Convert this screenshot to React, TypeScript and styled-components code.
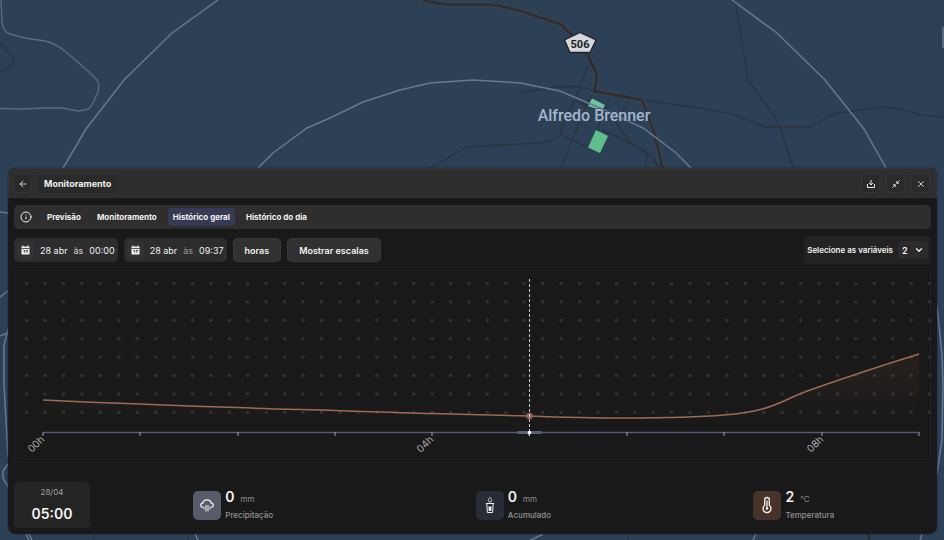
import React, { useState } from "react";
import styled, { createGlobalStyle } from "styled-components";
import { ArrowLeft, ChevronDown, Info, X } from "lucide-react";

const GlobalStyle = createGlobalStyle`
  * { box-sizing: border-box; }
  body { margin: 0; background: #2c4156; }
  button, select { font: inherit; color: inherit; border: 0; margin: 0; cursor: pointer; }
`;

const Page = styled.div`
  position: relative;
  min-height: 100vh;
  display: flex;
  flex-direction: column;
  justify-content: flex-end;
  padding: 8px 7px 6px 8px;
  overflow: hidden;
  font-family: Inter, "Liberation Sans", sans-serif;
  color: #f2f2f2;
`;

const MapCanvas = styled.svg`
  position: absolute;
  inset: 0;
  width: 100%;
  height: 100%;
`;

const Panel = styled.section`
  position: relative;
  border-radius: 8px;
  background: #191919;
  overflow: hidden;
  box-shadow: 0 0 2px rgba(20, 26, 32, 0.8);
`;

const Header = styled.header`
  display: flex;
  align-items: center;
  gap: 7px;
  height: 30px;
  padding: 1px 7px 0 5px;
  background: #2d2e2d;
  border: 1px solid #343534;
  border-bottom-color: #303130;
  border-radius: 8px 8px 0 0;
`;

const Title = styled.h1`
  margin: 0 auto 0 0;
  padding: 2px 6px;
  border-radius: 4px;
  background: #292a29;
  font-size: 9px;
  line-height: 14px;
  font-weight: 700;
`;

const IconButton = styled.button`
  display: grid;
  place-items: center;
  width: 17px;
  height: 17px;
  padding: 0;
  border-radius: 4px;
  background: #292a29;
  box-shadow: 0 0 0 1px #333433;
`;

const Actions = styled.div`
  display: flex;
  gap: 8px;
`;

const Body = styled.div`
  padding: 7px 6px 6px;
`;

const TabBar = styled.nav`
  display: flex;
  align-items: center;
  height: 24px;
  padding: 0 6px;
  border-radius: 5px;
  background: #2e2e2e;
`;

const InfoBadge = styled.span`
  display: grid;
  place-items: center;
  width: 12px;
  margin-right: 10px;
`;

const Tab = styled.button<{ $active: boolean }>`
  height: 18px;
  padding: 0 5px;
  margin-right: 6px;
  border-radius: 4px;
  background: ${(p) => (p.$active ? "#373a55" : "transparent")};
  font-size: 8px;
  font-weight: 700;
  white-space: nowrap;
`;

const Toolbar = styled.div`
  display: flex;
  align-items: center;
  gap: 6px;
  height: 30px;
  margin: 6px 0 5px;
`;

const DateButton = styled.button`
  display: flex;
  align-items: center;
  gap: 6px;
  height: 24px;
  padding: 0 3px;
  border-radius: 5px;
  background: #2d2d2d;
  font-size: 9px;
  white-space: nowrap;
`;

const CalendarBox = styled.span`
  display: grid;
  place-items: center;
  width: 17px;
  height: 18px;
  border-radius: 4px;
  background: #323232;
`;

const Muted = styled.span<{ $dim?: boolean }>`
  color: ${(p) => (p.$dim ? "#9a9a9a" : "#d8d8d8")};
`;

const ToolButton = styled.button`
  height: 24px;
  padding: 0 12px;
  border-radius: 5px;
  background: #313131;
  box-shadow: inset 0 0 0 1px #383838;
  font-size: 9px;
  font-weight: 600;
  white-space: nowrap;
`;

const VariableField = styled.label`
  display: flex;
  align-items: center;
  gap: 5px;
  height: 28px;
  margin-left: auto;
  padding: 0 3px;
  border-radius: 4px;
  background: #222222;
  font-size: 8px;
  font-weight: 600;
  white-space: nowrap;
`;

const SelectShell = styled.span`
  display: grid;
  align-items: center;
  border-radius: 4px;
  background: #2b2b2b;

  & > * { grid-area: 1 / 1; }
  & > svg { justify-self: end; margin-right: 4px; pointer-events: none; }
`;

const Select = styled.select`
  appearance: none;
  width: 30px;
  height: 18px;
  padding: 0 4px;
  background: transparent;
  font-size: 9px;
  font-weight: 600;
`;

const ChartCard = styled.figure`
  margin: 0;
  border-radius: 4px;
  box-shadow: inset 0 0 0 1px #1f1f1f;

  svg { display: block; width: 100%; height: auto; }
`;

const Footer = styled.footer`
  display: flex;
  align-items: center;
  gap: 6px;
  margin-top: 19px;
`;

const TimeCard = styled.div`
  display: flex;
  flex-direction: column;
  align-items: center;
  gap: 6px;
  width: 76px;
  height: 46px;
  padding-top: 4px;
  border-radius: 4px;
  background: #242424;
`;

const DayText = styled.span`
  font-size: 8px;
  line-height: 12px;
  color: #a3a3a3;
`;

const HourText = styled.strong`
  font-size: 14px;
  line-height: 20px;
  font-weight: 600;
`;

const Stats = styled.div`
  flex: 1;
  display: grid;
  grid-template-columns: repeat(3, 1fr);
  column-gap: 6px;
  justify-items: center;
`;

const Stat = styled.div`
  display: flex;
  align-items: center;
  gap: 4px;
`;

const StatIcon = styled.span<{ $tone: string }>`
  display: grid;
  place-items: center;
  width: 28px;
  height: 29px;
  border-radius: 5px;
  background: ${(p) => p.$tone};
`;

const StatText = styled.div`
  display: flex;
  flex-direction: column;
`;

const StatValue = styled.div`
  display: flex;
  align-items: baseline;
  gap: 6px;
  font-size: 14px;
  line-height: 18px;
  font-weight: 600;
`;

const Unit = styled.span`
  font-size: 8px;
  font-weight: 400;
  color: #8c8c8c;
`;

const StatLabel = styled.span`
  font-size: 8px;
  line-height: 14px;
  font-weight: 500;
  color: #939393;
`;

const rings = [
  "M218 0 172 33 124 80 86 129 63 168 30 240 8 330 4 345 4 385 8 456 27 530 32 540",
  "M732 0 777 33 825 80 864 129 886 168 920 250 937 307 942 355 943 385 942 440 937 473 922 534 920 540",
  "M258 168 273 153 307 128 330 118 363 102 400 90 430 83 473 80 520 83 560 91 600 108 643 128 675 152 691 168",
  "M0 212 8 213M0 297 8 291M0 336 8 333M8 464 3 471 3 478 8 487M195 534 198 540M529 541 543 534M753 540 756 534M943 27V48M25 532 29 540",
];

const streets = [
  "M736 5 741 37 748 80 775 117 781 130 793 168",
  "M642 100 700 108 733 114 765 127 810 127 833 114 880 107 900 109 920 115 944 117",
  "M430 168 467 147 500 145 540 143Q553 141 561 134",
  "M520 92 540 90Q573 82 594 91",
  "M588 66 578 92 561 130 561 135 592 149",
  "M592 95 586 106 561 168",
  "M574 101 590 106M609 100 595 136M602 130 640 148 652 156 659 168M648 153 645 168M628 102 616 123 630 142 648 155M500 0 495 4",
  "M94 534V540M188 534V540M628 534V540",
];

const highway =
  "M416-3 430 2Q445 5 465 4.500L490 4.500Q510 7 535 16L560 24Q569 30 588 56L596 72Q598 77 594 91L642 100 654 132 663 170";

function MapView() {
  return (
    <MapCanvas viewBox="0 0 944 540" preserveAspectRatio="xMidYMid slice" aria-label="Mapa de Alfredo Brenner">
      <rect width="944" height="540" fill="#2c4156" />
      <g fill="none" strokeLinejoin="round">
        <path d="M0 43 10 54Q17 62 10 67L0 71" stroke="#2b3746" strokeWidth="2" />
        {streets.map((d) => (
          <path key={d} d={d} stroke="#2b3440" strokeWidth="1.4" />
        ))}
        <path d="M1 0 2 22Q3 32 10 34L25 38 45 41Q55 43 66 52L88 71 97 80Q100 84 98 92L92 105Q90 110 78 111L62 108 45 108 20 109 0 108.500" stroke="#576c83" strokeWidth="1.4" />
        <path d="M869 533V541" stroke="#2c2f36" strokeWidth="3" />
        <path d={highway} stroke="#49494b" strokeWidth="4" />
        <path d={highway} stroke="#2d2f35" strokeWidth="3" />
      </g>
      <path d="M592 98.500 605 105 602 110.500 588 106Z" fill="#6bc6a0" />
      <path d="M596 130 608 136 600 153 588 147.500Z" fill="#60bd8e" />
      <g fill="none" stroke="#657a90" strokeWidth="1.500">
        {rings.map((d) => (
          <path key={d} d={d} />
        ))}
      </g>
      <path d="M580 32.500 596 40 590 52.500H570L564.500 40Z" fill="#d6d7da" stroke="#202329" strokeWidth="1.300" strokeLinejoin="round" />
      <g fontFamily="Roboto, sans-serif" textAnchor="middle">
        <text x="580" y="48" fontSize="11" fontWeight="700" fill="#202329">506</text>
        <text x="594" y="121" fontSize="16" fontWeight="500" fill="#a4b5ce" stroke="#2c4156" strokeWidth="1" paintOrder="stroke">Alfredo Brenner</text>
      </g>
    </MapCanvas>
  );
}

const DownloadIcon = () => (
  <svg width="10" height="10" viewBox="0 0 10 10" fill="none" stroke="#e6e6e6" strokeWidth="1">
    <path d="M5 1v5M3 4l2 2 2-2M1.500 5v3.500h7V5" />
  </svg>
);

const CollapseIcon = () => (
  <svg width="10" height="10" viewBox="0 0 10 10" fill="#e6e6e6" stroke="#e6e6e6">
    <path d="M8.500 1.500 6 4M1.500 8.500 4 6" strokeWidth="1" />
    <path d="M5.300 1.800v2.900h2.900ZM4.700 8.200V5.300H1.800Z" stroke="none" />
  </svg>
);

const CalendarIcon = () => (
  <svg width="9" height="10" viewBox="0 0 9 10">
    <path d="M2 .5v2M7 .5v2" stroke="#eee" strokeWidth="1" />
    <path d="M.5 1.500h8V9.500h-8Z" fill="#eee" />
    <path d="M.5 3.500h8" stroke="#303030" strokeWidth=".8" />
    <path d="M2.500 5.500h1.200v2M5 5.500h1.500L5.700 7.700" fill="none" stroke="#303030" strokeWidth=".9" />
  </svg>
);

const RainIcon = () => (
  <svg width="16" height="16" viewBox="0 0 16 16" fill="none" stroke="#f4f4f4" strokeWidth="1.300" strokeLinecap="round">
    <path d="M3.300 10.300C1 9.300 1.400 6.200 3.900 6c.6-4.300 7.500-4.300 8.200 0 2.700.2 2.900 3.300.6 4.300" />
    <path d="M5 10v2M7 8.500v5.500M9 8.500v5.500M11 10v2" strokeWidth="1" />
  </svg>
);

const GaugeIcon = () => (
  <svg width="12" height="18" viewBox="0 0 12 18" fill="none" stroke="#eef0f3">
    <path d="M6 1.500C4.800 3 4.300 3.700 4.300 4.400a1.700 1.700 0 0 0 3.400 0C7.700 3.700 7.200 3 6 1.500Z" strokeWidth=".8" />
    <path d="M2 7.500h8M2.800 7.500l.6 9h5.200l.6-9" strokeWidth="1" />
    <path d="M4.500 10.500h3l-.2 4.500H4.700Z" fill="#eef0f3" stroke="none" />
  </svg>
);

const ThermometerIcon = () => (
  <svg width="12" height="18" viewBox="0 0 12 18" fill="none" stroke="#f7f1ee" strokeWidth="1.300" strokeLinecap="round">
    <path d="M3.700 9.300V3.800a2.300 2.300 0 0 1 4.600 0v5.500a4 4 0 1 1-4.600 0Z" />
    <path d="M6 5v7" />
    <circle cx="6" cy="12.500" r="1.300" fill="#f7f1ee" stroke="none" />
  </svg>
);

const curve =
  "M29 130C60 131.500 95 133 126 134C160 135.500 190 136.500 223 137.500C260 139 290 139.500 321 140.500C355 142 385 142.500 418 143.500C450 144.500 480 145 515 146C555 147.500 580 148 613 148C650 148 680 147.500 710 145C760 141 765 131 796 120C830 108 860 98 905 84";
const ticks = [29, 126, 224, 321, 418, 515, 613, 710, 808, 905];
const hours = [
  { x: 29, label: "00h" },
  { x: 418, label: "04h" },
  { x: 808, label: "08h" },
];

function Chart() {
  return (
    <ChartCard>
      <svg viewBox="0 0 917 193" role="img" aria-label="Temperatura por hora">
        <defs>
          <pattern id="dots" x="3.400" y="4.200" width="18.430" height="18.430" patternUnits="userSpaceOnUse">
            <circle cx="9.200" cy="9.200" r="1.600" fill="#333333" />
          </pattern>
          <linearGradient id="area" x1="0" y1="84" x2="0" y2="150" gradientUnits="userSpaceOnUse">
            <stop offset="0" stopColor="#a86a4a" stopOpacity=".1" />
            <stop offset="1" stopColor="#a86a4a" stopOpacity="0" />
          </linearGradient>
        </defs>
        <rect x="3" y="4" width="914" height="148" fill="url(#dots)" />
        <path d={`${curve}V162H29Z`} fill="url(#area)" />
        <path d={curve} fill="none" stroke="#9c6b54" strokeWidth="1.500" />
        <path d="M29 162.500H905" stroke="#555775" strokeWidth="1.300" />
        {ticks.map((x) => (
          <path key={x} d={`M${x} 162v4`} stroke="#a0a0b4" strokeWidth="1" />
        ))}
        <path d="M503.500 162.500h24" stroke="#596272" strokeWidth="3" />
        <circle cx="515.500" cy="146" r="3.300" fill="#9b6259" />
        <path d="M515.500 9V166" stroke="#c8c8c8" strokeWidth="1" strokeDasharray="3 2" />
        <circle cx="515.500" cy="162.500" r="1.800" fill="#fff" />
        {hours.map(({ x, label }) => (
          <text key={label} transform={`translate(${x + 2} 170) rotate(-45)`} textAnchor="end" fontFamily="Inter, sans-serif" fontSize="10" fill="#b2b2b2">
            {label}
          </text>
        ))}
      </svg>
    </ChartCard>
  );
}

const tabs = ["Previsão", "Monitoramento", "Histórico geral", "Histórico do dia"];

const stats = [
  { value: "0", unit: "mm", label: "Precipitação", tone: "#585b68", icon: <RainIcon /> },
  { value: "0", unit: "mm", label: "Acumulado", tone: "#272c37", icon: <GaugeIcon /> },
  { value: "2", unit: "°C", label: "Temperatura", tone: "#48332b", icon: <ThermometerIcon /> },
];

export default function App() {
  const [active, setActive] = useState("Histórico geral");

  return (
    <>
      <GlobalStyle />
      <Page>
        <MapView />
        <Panel>
          <Header>
            <IconButton aria-label="Voltar"><ArrowLeft size={10} /></IconButton>
            <Title>Monitoramento</Title>
            <Actions>
              <IconButton aria-label="Baixar"><DownloadIcon /></IconButton>
              <IconButton aria-label="Minimizar"><CollapseIcon /></IconButton>
              <IconButton aria-label="Fechar"><X size={10} /></IconButton>
            </Actions>
          </Header>
          <Body>
            <TabBar>
              <InfoBadge><Info size={12} strokeWidth={2} /></InfoBadge>
              {tabs.map((tab) => (
                <Tab key={tab} $active={tab === active} onClick={() => setActive(tab)}>{tab}</Tab>
              ))}
            </TabBar>
            <Toolbar>
              <DateButton>
                <CalendarBox><CalendarIcon /></CalendarBox>
                <span>28 abr</span><Muted>às</Muted><span>00:00</span>
              </DateButton>
              <DateButton>
                <CalendarBox><CalendarIcon /></CalendarBox>
                <span>28 abr</span><Muted $dim>às</Muted><span>09:37</span>
              </DateButton>
              <ToolButton>horas</ToolButton>
              <ToolButton>Mostrar escalas</ToolButton>
              <VariableField>
                Selecione as variáveis
                <SelectShell>
                  <Select defaultValue="2">
                    <option>1</option>
                    <option>2</option>
                    <option>3</option>
                  </Select>
                  <ChevronDown size={10} strokeWidth={3} />
                </SelectShell>
              </VariableField>
            </Toolbar>
            <Chart />
            <Footer>
              <TimeCard>
                <DayText>28/04</DayText>
                <HourText>05:00</HourText>
              </TimeCard>
              <Stats>
                {stats.map((s) => (
                  <Stat key={s.label}>
                    <StatIcon $tone={s.tone}>{s.icon}</StatIcon>
                    <StatText>
                      <StatValue>{s.value}<Unit>{s.unit}</Unit></StatValue>
                      <StatLabel>{s.label}</StatLabel>
                    </StatText>
                  </Stat>
                ))}
              </Stats>
            </Footer>
          </Body>
        </Panel>
      </Page>
    </>
  );
}
